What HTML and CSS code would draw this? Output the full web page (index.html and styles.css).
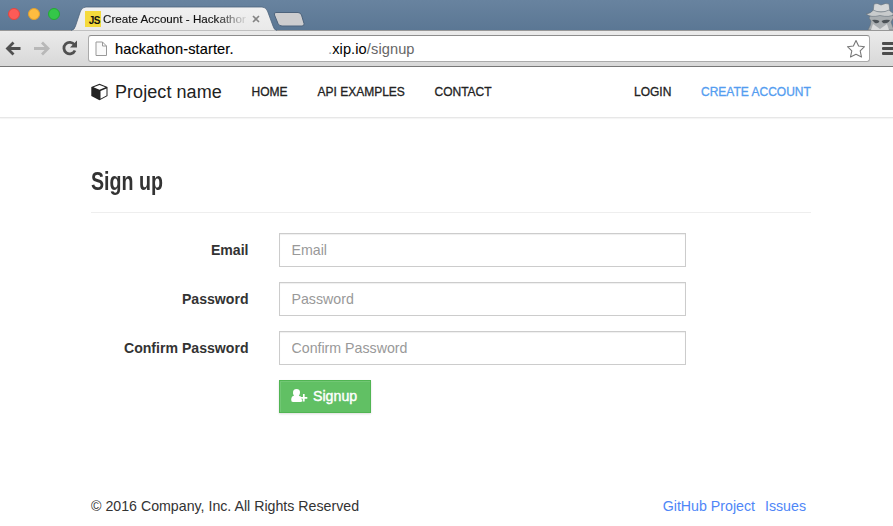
FILE: index.html
```html
<!DOCTYPE html>
<html lang="en">
<head>
<meta charset="utf-8">
<title>Create Account - Hackathon Starter</title>
<link rel="stylesheet" href="styles.css">
</head>
<body>
<div class="titlebar">
  <div class="lights"><i class="light red"></i><i class="light amber"></i><i class="light green"></i></div>
  <div class="tab">
    <svg class="tab-shape" width="206" height="25" viewBox="0 0 206 25"><defs><linearGradient id="tg" x2="0" y2="1"><stop stop-color="#f1f1f1"/><stop offset="1" stop-color="#e9e9e9"/></linearGradient></defs><path d="M0 24.5Q3.500 24 4.500 20L9.500 5Q11 1 15 1H191Q195 1 196.500 5L202 20Q203 24 206 24.500" fill="url(#tg)" stroke="#4d637c" stroke-width=".8"/></svg>
    <span class="favicon">JS</span><span class="tab-title">Create Account - Hackathon</span>
    <svg class="close" width="8" height="8" viewBox="0 0 8 8"><path d="M1 1l6 6M7 1L1 7" stroke="#858585" stroke-width="1.6"/></svg>
  </div>
  <svg class="new-tab" width="34" height="18" viewBox="0 0 34 18"><path d="M3 1.500H25Q27.500 1.500 28.500 4L31 12.500Q31.500 15 29 15H9Q6 15 5 12.500L1.500 4Q.5 1.500 3 1.500Z" fill="#cdcdcf" stroke="#4d637c"/></svg>
  <svg class="incognito" width="27" height="30" viewBox="0 0 27 30"><g stroke="#65717b" stroke-width=".6"><path d="M2 30Q5 25 5 21L3 18Q5 12 14 12Q25 12 28 17L25 22L28 30Z" fill="#a9aeb1"/><path d="M7 12L8 4Q11 2.500 15 5Q20 2.500 23 4L24 12Z" fill="#d5d7d8"/><path d="M0 14Q5 18 14 15.500Q24 18 28 14Q24 11 23 10Q15 14 7 10Q6 13 0 14Z" fill="#c8cbcc"/></g><path d="M6 20Q10 19 13.500 21Q12.500 24 9 23ZM15.500 21Q19 19 24 20Q22 24 17 23Z" fill="#4b5257"/><path d="M7 24L14 29L21 24L23 30H5Z" fill="#dadcdd"/></svg>
</div>
<div class="toolbar">
  <svg class="arrows" width="80" height="36" viewBox="0 0 80 36"><g fill="none" stroke-width="2.800"><path d="M20.500 18.500H8M13.500 12.500L7.500 18.500L13.500 24.500" stroke="#505050"/><path d="M34 18.500H47M42 12.500L48 18.500L42 24.500" stroke="#b8b8b8"/><path d="M74.500 14.800A5.800 5.800 0 1 0 75 20.500" stroke="#505050"/></g><path d="M77 10.500V17.500H70Z" fill="#505050"/></svg>
  <div class="omnibox">
    <svg class="page-icon" width="13" height="16" viewBox="0 0 13 16"><path d="M1 1H7.500L11.500 5V14.500H1ZM7.500 1V5H11.500" fill="#fafafa" stroke="#999"/></svg>
    <span class="host">hackathon-starter.</span><span class="url"><i class="dot">.</i>xip.io<em>/signup</em></span>
    <svg class="star" width="20" height="20" viewBox="0 0 20 20"><path d="M10 1.500L12.600 7L18.500 7.700L14.200 11.900L15.500 18L10 15.300L4.500 18L5.800 11.900L1.500 7.700L7.400 7Z" fill="#fff" stroke="#777" stroke-width="1.100" stroke-linejoin="round"/></svg>
  </div>
  <div class="menu"><i></i><i></i><i></i></div>
</div>
<nav class="navbar"><div class="container nav-row">
  <a class="brand"><svg width="18" height="18" viewBox="0 0 18 18"><path d="M8.500 .8L16.500 4V13L8.500 17.300L.3 13V4Z" fill="#222"/><path d="M8.500 1.900L14.500 4.300L8.500 6.700L2.500 4.300ZM9.500 8L15.500 5.400V12.400L9.500 15.700Z" fill="#fff"/></svg><span>Project name</span></a>
  <a class="link home">HOME</a><a class="link api">API EXAMPLES</a><a class="link contact">CONTACT</a>
  <a class="link login">LOGIN</a><a class="link create">CREATE ACCOUNT</a>
</div></nav>
<main class="container">
  <div class="page-header"><h3>Sign up</h3></div>
  <form>
    <div class="row"><label for="email"><span>Email</span></label><input id="email" type="email" placeholder="Email"></div>
    <div class="row"><label for="pw"><span>Password</span></label><input id="pw" type="password" placeholder="Password"></div>
    <div class="row"><label for="pw2"><span>Confirm Password</span></label><input id="pw2" type="password" placeholder="Confirm Password"></div>
    <button type="button"><svg width="17" height="14" viewBox="0 0 17 14"><path d="M5.500 0C8 0 9.200 1.600 9 4C8.900 5.200 8.400 6.100 7.800 6.700Q8.800 7.500 10 7.500V10.300H11.300V12.600Q10.500 13 9.500 13H2Q0 13 .2 10.500Q.4 7 3.200 6.700C2.500 6 2 5.200 2 4C1.900 1.600 3.100 0 5.500 0Z" fill="#fff"/><path d="M12.800 5V12.500M9.300 8.900H16.300" stroke="#fff" stroke-width="1.700"/></svg><span>Signup</span></button>
  </form>
</main>
<footer class="container"><span class="copy">© 2016 Company, Inc. All Rights Reserved</span><span class="foot-links"><a>GitHub Project</a><a>Issues</a></span></footer>
</body>
</html>
```

FILE: styles.css
```css
* { box-sizing: border-box; }
body { margin: 0; height: 526px; overflow: hidden; display: flex; flex-direction: column; background: #fff; color: #333; font: 14.200px/20px "Liberation Sans", Arial, sans-serif; }
svg { display: block; flex: none; }
.titlebar { height: 30px; flex: none; display: flex; background: linear-gradient(#68839f, #5b7794); }
.lights { display: flex; gap: 8px; padding: 8px 0 0 8px; width: 73px; flex: none; }
.light { width: 12px; height: 12px; border-radius: 50%; }
.red { background: #fc5b57; border: 1px solid #e2463f; }
.amber { background: #fdbc40; border: 1px solid #e2a02e; }
.green { background: #34c749; border: 1px solid #24a934; }
.tab { width: 202px; height: 24px; margin-top: 6px; position: relative; display: flex; color: #111; }
.tab-shape { position: absolute; left: -2px; top: 0; }
.favicon { position: relative; margin: 5px 0 0 12px; width: 16px; height: 16px; background: #f5da3c; font: bold 10px/20px "Liberation Sans Narrow", "Liberation Sans", sans-serif; text-align: right; padding-right: 1px; letter-spacing: -.5px; }
.tab-title { position: relative; width: 143px; height: 18px; margin: 4px 0 0 2px; overflow: hidden; white-space: nowrap; font-size: 11.600px; line-height: 18px; letter-spacing: .02px; -webkit-text-stroke: .15px #111; -webkit-mask-image: linear-gradient(90deg, #000 112px, transparent 146px); mask-image: linear-gradient(90deg, #000 112px, transparent 146px); }
.close { position: relative; margin: 9px 0 0 6px; }
.new-tab { margin: 11px 0 0 -2px; }
.incognito { margin-left: auto; }
.toolbar { height: 37px; flex: none; display: flex; background: linear-gradient(#ebebeb, #d8d8d8); border-top: 1px solid #979797; border-bottom: 1px solid #777; }
.arrows { width: 80px; margin-top: -1px; }
.omnibox { margin: 4px 0 0 8px; width: 782px; height: 27px; background: #fff; border: 1px solid #aaa; border-top-color: #8d8d8d; border-radius: 3px; display: flex; align-items: center; color: #000; font-size: 14.600px; letter-spacing: .1px; white-space: nowrap; }
.page-icon { margin-left: 6px; }
.host { margin-left: 7px; width: 213px; -webkit-text-stroke: .15px #000; }
.url { width: 92px; }
.dot { color: #7ba7bd; font-style: normal; }
.url em { color: #666; font-style: normal; }
.star { margin-left: auto; margin-right: 3px; }
.menu { width: 11px; margin: 11px 0 0 12px; display: flex; flex-direction: column; gap: 2px; }
.menu i { height: 3px; background: #4c4c4c; border-radius: 1px 0 0 1px; }
.container { width: 720px; margin-left: 91px; }
.navbar { height: 52px; flex: none; }
.nav-row { display: flex; height: 50px; align-items: center; color: #222; white-space: nowrap; }
.navbar::after { content: ""; display: block; height: 1px; background: #e7e7e7; box-shadow: 0 1px 1px #f3f3f3; }
.brand { display: flex; align-items: center; gap: 6px; width: 160.500px; font-size: 18px; letter-spacing: .06px; }
.link { font-size: 12px; -webkit-text-stroke: .3px currentColor; }
.home { width: 66px; }
.api { width: 117px; }
.login { margin-left: auto; width: 67px; }
.create { color: #549df0; width: 110px; }
.page-header { height: 94px; border-bottom: 1px solid #eee; margin-bottom: 20px; }
h3 { margin: 0; padding-top: 47px; font: bold 26px/30px "Liberation Sans", sans-serif; width: 100px; white-space: nowrap; transform: scaleX(.755); transform-origin: left; }
.row { display: flex; height: 34px; margin-bottom: 15px; }
label { width: 157.500px; margin-right: 30.500px; text-align: right; font-weight: bold; font-size: 14.100px; line-height: 34px; }
input { width: 407px; height: 34px; padding: 6px 11.500px; border: 1px solid #ccc; border-radius: 0; box-shadow: inset 0 1px 1px #0001; font: inherit; }
input::placeholder { color: #999; }
button { margin: 0 0 0 188px; width: 92px; height: 33px; padding: 0 11px 1px; display: flex; align-items: center; gap: 5px; border: 1px solid #51b553; border-radius: 0; background: #61c064; color: #fff; font: inherit; -webkit-text-stroke: .4px #fff; box-shadow: inset 1px 1px 0 #71c774, 0 1px 2px #0002; }
button svg { -webkit-text-stroke: 0; }
footer { display: flex; justify-content: space-between; margin-top: 83px; white-space: nowrap; }
.foot-links { display: flex; gap: 10px; padding-right: 5px; color: #4f86f7; }
```
